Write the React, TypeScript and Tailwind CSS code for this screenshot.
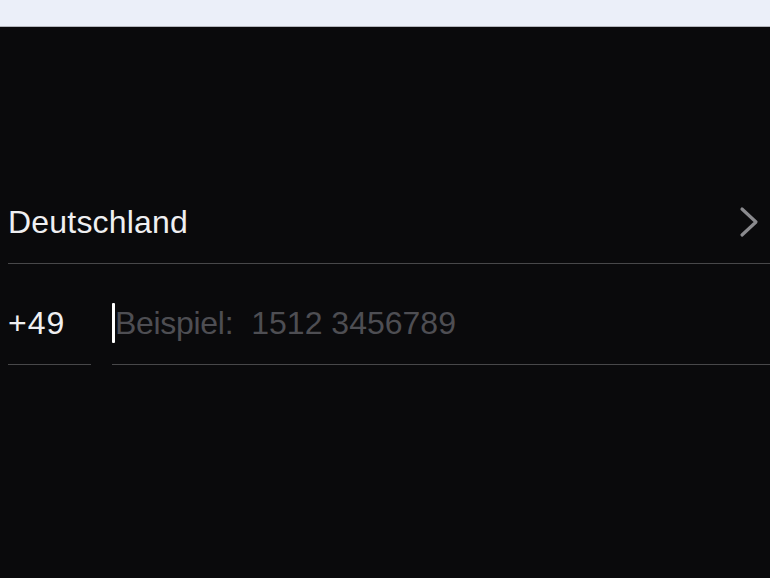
import React from "react";

export default function App() {
  const font = { fontFamily: '"Liberation Sans", Arial, sans-serif' };
  return (
    <div className="w-[770px] h-[578px] flex flex-col bg-[#0a0a0c] overflow-hidden" style={font}>
      <div className="h-[27px] shrink-0 bg-[#ebeff9] border-b border-[#b4b6bd]" />
      <div className="flex-1 flex flex-col pt-[163px]">
        <div className="ml-[8px] flex items-end justify-between border-b border-[#48484a] pt-[16px] pb-[25px] pr-[11px]">
          <span className="text-[32px] leading-[32px] tracking-[0.2px] text-[#efeff1]">Deutschland</span>
          <svg width="20" height="32" viewBox="0 0 20 32">
            <path d="M3 3 L17 16 L3 29" fill="none" stroke="#8a8a8e" strokeWidth="3.2" strokeLinecap="round" strokeLinejoin="round" />
          </svg>
        </div>
        <div className="flex">
          <div className="ml-[8px] w-[83px] border-b border-[#48484a] pt-[43px] pb-[25px]">
            <span className="block text-[32px] leading-[32px] tracking-[1px] text-[#efeff1]">+49</span>
          </div>
          <div className="ml-[21px] flex-1 border-b border-[#48484a] pt-[38px] pb-[21px] flex items-center">
            <div className="w-[3px] h-[40px] bg-white rounded-[1px] shrink-0" />
            <span className="text-[32px] leading-[32px] text-[#4e4e53] tracking-[-0.3px]">Beispiel:</span>
            <span className="ml-[18px] text-[32px] leading-[32px] text-[#4e4e53]">1512 3456789</span>
          </div>
        </div>
      </div>
    </div>
  );
}
